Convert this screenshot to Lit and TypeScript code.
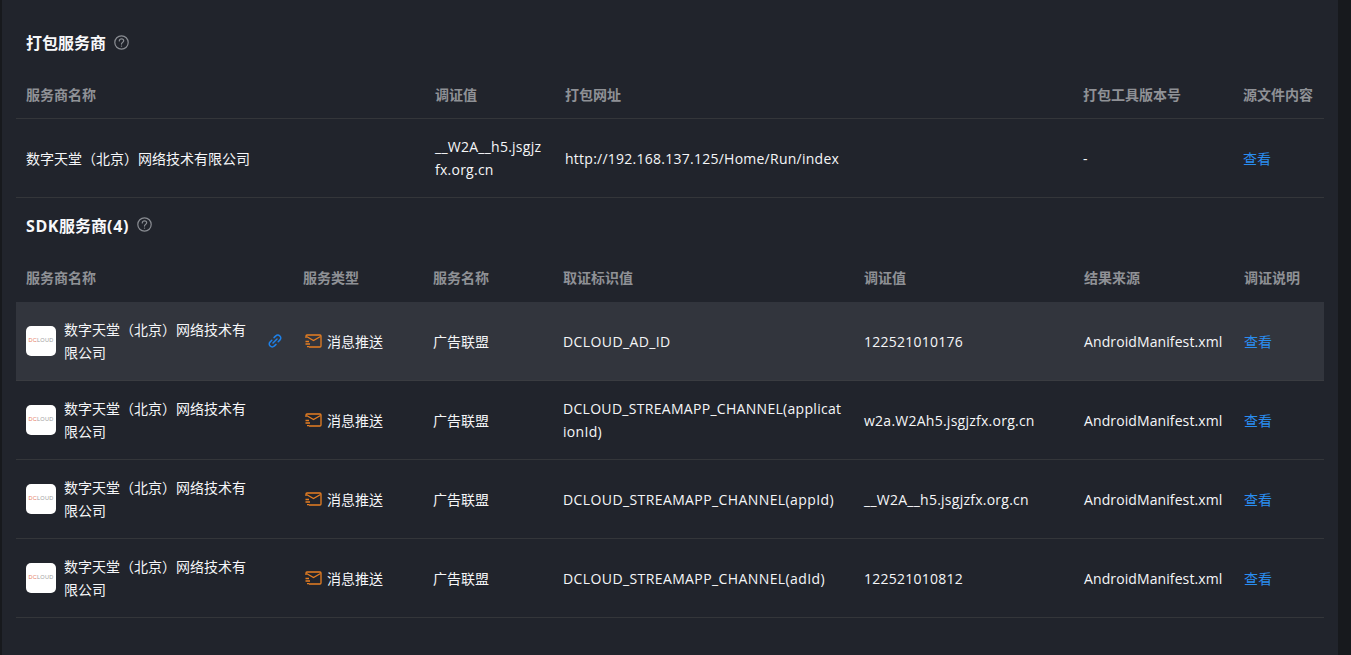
import { LitElement, html, css } from "lit";
import { customElement } from "lit/decorators.js";

const NAME = "数字天堂（北京）网络技术有限公司";
const rows = [
  ["广告联盟", "DCLOUD_AD_ID", "122521010176"],
  ["广告联盟", "DCLOUD_STREAMAPP_CHANNEL(applicationId)", "w2a.W2Ah5.jsgjzfx.org.cn"],
  ["广告联盟", "DCLOUD_STREAMAPP_CHANNEL(appId)", "__W2A__h5.jsgjzfx.org.cn"],
  ["广告联盟", "DCLOUD_STREAMAPP_CHANNEL(adId)", "122521010812"],
];

@customElement("app-root")
export class AppRoot extends LitElement {
  static styles = css`
    :host { display: block; height: 655px; background: #17191d; overflow: hidden;
      font-family: "Open Sans", "Noto Sans CJK SC", sans-serif; font-size: 14px; color: #f5f6f8; }
    .panel { margin-left: 2px; width: 1336px; height: 655px; background: #21242c; box-sizing: border-box; padding: 0 14px; }
    .title { display: flex; align-items: center; gap: 8px; height: 28px; padding-left: 10px; font-size: 16px; font-weight: 700; color: #f7f8fa; }
    .t1 { padding-top: 28px; padding-bottom: 16px; }
    .t2 { padding-top: 13px; padding-bottom: 16px; }
    .title .lat { letter-spacing: .6px; }
    .title svg { display: block; }
    table { width: 1308px; border-collapse: collapse; table-layout: fixed; }
    th { height: 47px; padding: 0 10px; box-sizing: border-box; text-align: left; font-size: 14px; line-height: 20px; font-weight: 700; color: #8f9196; white-space: nowrap; }
    .tb1 th { height: 46px; border-bottom: 1px solid #34363a; }
    td { padding: 0 10px; box-sizing: border-box; height: 79px; line-height: 23px; border-bottom: 1px solid #34363a; word-break: break-all; }
    .tb1 td { padding-top: 1px; }
    .hl td { background: #32353d; border-bottom-color: #3a3c41; padding-top: 1px; }
    .ls { letter-spacing: .25px; }
    .lsw { letter-spacing: .3px; }
    .lsx { letter-spacing: .4px; }
    .lsn { letter-spacing: .1px; }
    a { color: #2a8df0; text-decoration: none; }
    .sup { display: flex; align-items: center; gap: 8px; }
    .sup .txt { flex: 1; min-width: 0; line-height: 23px; }
    .link { flex: none; margin-right: 1px; margin-left: 12px; width: 14px; height: 14px; }
    .logo { flex: none; width: 30px; height: 30px; border-radius: 5px; background: #fff; display: flex; align-items: center; justify-content: center;
      font-size: 5.6px; letter-spacing: .2px; color: #a0a0a0; line-height: 1; overflow: hidden; white-space: nowrap; font-family: "Liberation Sans", sans-serif; }
    .logo b { color: #e8826a; font-weight: 400; }
    .type { display: flex; align-items: center; gap: 5px; padding-left: 2px; }
    .type svg { flex: none; }
  `;

  private help() {
    return html`<svg width="15" height="15" viewBox="0 0 15 15" fill="none" stroke="#8a8d93" stroke-width="1.2">
      <circle cx="7.5" cy="7.5" r="6.7"/>
      <path d="M5.3 5.9c0-1.2 1-2 2.2-2s2.2.8 2.2 1.9c0 1.5-2.2 1.7-2.2 3.3" stroke-linecap="round"/>
      <circle cx="7.5" cy="11.1" r=".7" fill="#8a8d93" stroke="none"/>
    </svg>`;
  }
  private mail() {
    return html`<svg width="17" height="14" viewBox="0 0 17 14" fill="none" stroke="#e67e22" stroke-width="1.3">
      <path d="M1 4V2a1 1 0 0 1 1-1h13a1 1 0 0 1 1 1v10a1 1 0 0 1-1 1H4"/>
      <path d="M1.5 2.5 8.5 6.5 15.5 2.5"/>
      <path d="M.5 7.5H4M.5 10H5M2 12.7H4"/>
    </svg>`;
  }
  private linkIcon() {
    return html`<svg class="link" viewBox="0 0 14 14" fill="none" stroke="#1e80e8" stroke-width="1.5" stroke-linecap="round">
      <path d="M6 3.6 7.8 1.9a2.6 2.6 0 0 1 3.9 0l.3.3a2.6 2.6 0 0 1 0 3.7L10.2 7.7"/>
      <path d="M8 10.4 6.2 12.1a2.6 2.6 0 0 1-3.9 0L2 11.8a2.6 2.6 0 0 1 0-3.7L3.8 6.3"/>
      <path d="M5 9 9 5"/>
    </svg>`;
  }

  render() {
    return html`<div class="panel">
      <div class="title t1">打包服务商 ${this.help()}</div>
      <table class="tb1">
        <colgroup><col style="width:409px"><col style="width:130px"><col style="width:518px"><col style="width:160px"><col style="width:91px"></colgroup>
        <thead><tr><th>服务商名称</th><th>调证值</th><th>打包网址</th><th>打包工具版本号</th><th>源文件内容</th></tr></thead>
        <tbody><tr>
          <td>${NAME}</td>
          <td class="ls">__W2A__h5.jsgjzfx.org.cn</td>
          <td class="ls">http://192.168.137.125/Home/Run/index</td>
          <td>-</td>
          <td><a>查看</a></td>
        </tr></tbody>
      </table>
      <div class="title t2"><span><span class="lat">SDK</span>服务商<span class="lat">(4)</span></span> ${this.help()}</div>
      <table class="tb2">
        <colgroup><col style="width:277px"><col style="width:130px"><col style="width:130px"><col style="width:301px"><col style="width:220px"><col style="width:160px"><col style="width:90px"></colgroup>
        <thead><tr><th>服务商名称</th><th>服务类型</th><th>服务名称</th><th>取证标识值</th><th>调证值</th><th>结果来源</th><th>调证说明</th></tr></thead>
        <tbody>
          ${rows.map((r, i) => html`<tr class=${i === 0 ? "hl" : ""}>
            <td><div class="sup">
              <span class="logo"><b>DC</b>LOUD</span>
              <span class="txt">${NAME}</span>
              ${i === 0 ? this.linkIcon() : html`<span class="link"></span>`}
            </div></td>
            <td><div class="type">${this.mail()}<span>消息推送</span></div></td>
            <td>${r[0]}</td>
            <td class=${i === 1 ? "lsw" : "lsx"}>${r[1]}</td>
            <td class="ls">${r[2]}</td>
            <td class="lsn">AndroidManifest.xml</td>
            <td><a>查看</a></td>
          </tr>`)}
        </tbody>
      </table>
    </div>`;
  }
}
